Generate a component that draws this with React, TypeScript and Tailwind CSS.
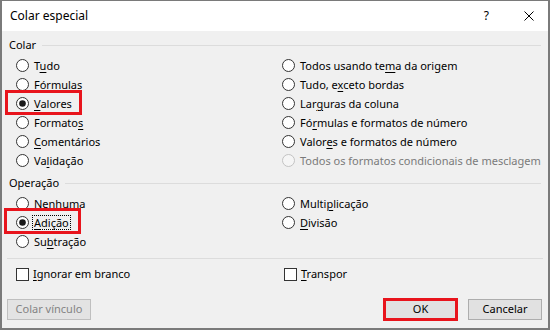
import type { ReactNode } from 'react';

type Opt = {
  before: string;
  key?: string;
  after?: string;
  checked?: boolean;
  disabled?: boolean;
  focus?: boolean;
};

const COLAR_LEFT: Opt[] = [
  { before: 'T', key: 'u', after: 'do' },
  { before: '', key: 'F', after: 'órmulas' },
  { before: '', key: 'V', after: 'alores', checked: true },
  { before: 'Formato', key: 's', after: '' },
  { before: '', key: 'C', after: 'omentários' },
  { before: 'Va', key: 'l', after: 'idação' },
];

const COLAR_RIGHT: Opt[] = [
  { before: 'Todos usando te', key: 'm', after: 'a da origem' },
  { before: 'Tudo, e', key: 'x', after: 'ceto bordas' },
  { before: 'Lar', key: 'g', after: 'uras da coluna' },
  { before: 'Fó', key: 'r', after: 'mulas e formatos de número' },
  { before: 'Valor', key: 'e', after: 's e formatos de número' },
  { before: 'Todos os formatos condicionais de mesclagem', disabled: true },
];

const OP_LEFT: Opt[] = [
  { before: 'Nenhuma' },
  { before: '', key: 'A', after: 'dição', checked: true, focus: true },
  { before: 'Su', key: 'b', after: 'tração' },
];

const OP_RIGHT: Opt[] = [
  { before: 'Multi', key: 'p', after: 'licação' },
  { before: '', key: 'D', after: 'ivisão' },
];

const Label = ({ o }: { o: Opt }) => (
  <>
    {o.before}
    {o.key && <u className="underline-offset-[2px]">{o.key}</u>}
    {o.after}
  </>
);

const Radio = ({ o }: { o: Opt }) => (
  <div className={`flex h-[19px] items-center ${o.disabled ? 'text-[#7a7a7a]' : 'text-black'}`}>
    <svg width="13" height="13" viewBox="0 0 13 13" className="shrink-0">
      <circle
        cx="6.5"
        cy="6.5"
        r="6"
        fill={o.disabled ? '#f5f5f5' : '#ffffff'}
        stroke={o.disabled ? '#c2c2c2' : '#333333'}
        strokeWidth="1"
      />
      {o.checked && <circle cx="6.5" cy="6.5" r="3.3" fill="#1a1a1a" />}
    </svg>
    <span
      className={`ml-[3px] leading-[13px] ${
        o.focus ? 'border border-dotted border-black px-[1px]' : 'px-[2px]'
      }`}
    >
      <Label o={o} />
    </span>
  </div>
);

const Group = ({ title }: { title: string }) => (
  <div className="flex h-[16px] items-center pl-[7px] pr-[7px]">
    <span className="text-black">{title}</span>
    <div className="ml-[6px] h-px flex-1 bg-[#dcdcdc]"></div>
  </div>
);

const Check = ({ children }: { children: ReactNode }) => (
  <div className="flex h-[19px] items-center">
    <div className="h-[13px] w-[13px] shrink-0 border border-[#333] bg-white"></div>
    <span className="ml-[4px]">{children}</span>
  </div>
);

export default function App() {
  return (
    <div className="relative h-[330px] w-[550px] border-b-2 border-l-2 border-r-2 border-t border-[#7a7a7a] bg-[#f0f0f0] font-['Noto_Sans',sans-serif] text-[11px] text-black">
      <div className="flex h-[30px] items-center bg-white pl-[8px]">
        <span className="text-[12px]">Colar especial</span>
        <span className="ml-auto text-[12px]">?</span>
        <svg width="10" height="10" viewBox="0 0 10 10" className="ml-[35px] mr-[14px]">
          <path d="M0.5 0.5 L9.5 9.5 M9.5 0.5 L0.5 9.5" stroke="#000" strokeWidth="1" />
        </svg>
      </div>

      <div className="pt-[6px]">
        <Group title="Colar" />
        <div className="mt-[3px] grid grid-cols-[266px_1fr] pl-[14px]">
          <div className="flex flex-col">
            {COLAR_LEFT.map((o, i) => (
              <Radio key={i} o={o} />
            ))}
          </div>
          <div className="flex flex-col">
            {COLAR_RIGHT.map((o, i) => (
              <Radio key={i} o={o} />
            ))}
          </div>
        </div>

        <div className="mt-[5px]">
          <Group title="Operação" />
        </div>
        <div className="mt-[3px] grid grid-cols-[266px_1fr] pl-[14px]">
          <div className="flex flex-col">
            {OP_LEFT.map((o, i) => (
              <Radio key={i} o={o} />
            ))}
          </div>
          <div className="flex flex-col">
            {OP_RIGHT.map((o, i) => (
              <Radio key={i} o={o} />
            ))}
          </div>
        </div>

        <div className="mx-[5px] mt-[7px] h-px bg-[#dcdcdc]"></div>

        <div className="mt-[6px] grid grid-cols-[268px_1fr] pl-[14px]">
          <Check>
            <u className="underline-offset-[2px]">I</u>gnorar em branco
          </Check>
          <Check>
            <u className="underline-offset-[2px]">T</u>ranspor
          </Check>
        </div>

        <div className="mt-[14px] flex items-center pl-[5px] pr-[6px]">
          <button className="h-[21px] w-[84px] border border-[#bfbfbf] bg-[#e3e3e3] text-[#838383]">
            Colar vínculo
          </button>
          <button className="ml-auto h-[23px] w-[75px] border-[3px] border-[#e8141c] bg-[#e1e1e1]">
            OK
          </button>
          <button className="ml-[10px] h-[21px] w-[74px] border border-[#adadad] bg-[#e1e1e1]">
            Cancelar
          </button>
        </div>
      </div>

      <div className="pointer-events-none absolute left-[3px] top-[89px] h-[25px] w-[77px] border-[3px] border-[#e8141c]"></div>
      <div className="pointer-events-none absolute left-[2px] top-[207px] h-[26px] w-[77px] border-[3px] border-[#e8141c]"></div>
    </div>
  );
}
